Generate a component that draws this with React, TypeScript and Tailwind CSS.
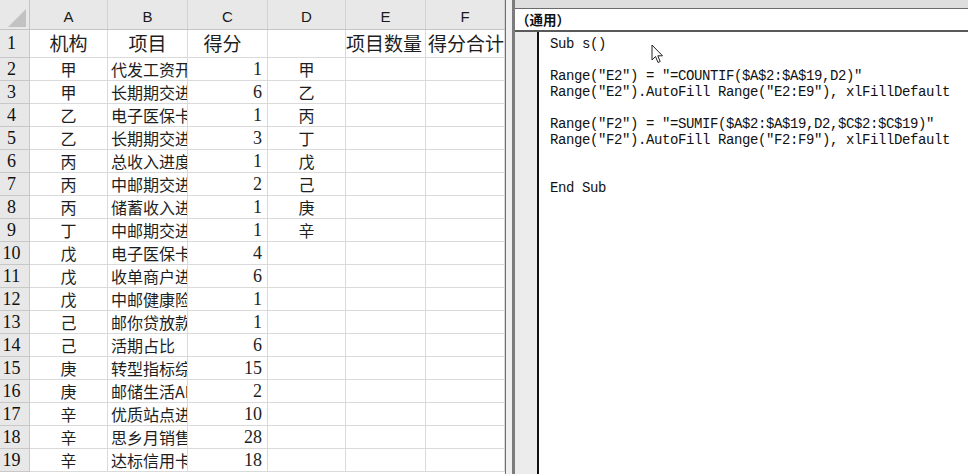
import React from 'react';

// column widths of the sheet, A..F
const COLS = ['w-[78px]', 'w-[80px]', 'w-[80px]', 'w-[78px]', 'w-[80px]', 'w-[79px]'];
const LETTERS = ['A', 'B', 'C', 'D', 'E', 'F'];

const ROWS: [string, string, number, string][] = [
  ['甲', '代发工资开户', 1, '甲'],
  ['甲', '长期期交进度', 6, '乙'],
  ['乙', '电子医保卡', 1, '丙'],
  ['乙', '长期期交进度', 3, '丁'],
  ['丙', '总收入进度', 1, '戊'],
  ['丙', '中邮期交进度', 2, '己'],
  ['丙', '储蓄收入进度', 1, '庚'],
  ['丁', '中邮期交进度', 1, '辛'],
  ['戊', '电子医保卡', 4, ''],
  ['戊', '收单商户进度', 6, ''],
  ['戊', '中邮健康险', 1, ''],
  ['己', '邮你贷放款', 1, ''],
  ['己', '活期占比', 6, ''],
  ['庚', '转型指标综合', 15, ''],
  ['庚', '邮储生活APP', 2, ''],
  ['辛', '优质站点进度', 10, ''],
  ['辛', '思乡月销售', 28, ''],
  ['辛', '达标信用卡', 18, ''],
];

const CODE = [
  'Sub s()',
  '',
  'Range("E2") = "=COUNTIF($A$2:$A$19,D2)"',
  'Range("E2").AutoFill Range("E2:E9"), xlFillDefault',
  '',
  'Range("F2") = "=SUMIF($A$2:$A$19,D2,$C$2:$C$19)"',
  'Range("F2").AutoFill Range("F2:F9"), xlFillDefault',
  '',
  '',
  'End Sub',
];

const cjk = "font-['Noto_Sans_CJK_SC',sans-serif]";
const serif = "font-['Liberation_Serif','Noto_Sans_CJK_SC',serif]";

const Sheet = () => (
  <div className="flex h-full w-[505px] shrink-0 flex-col bg-white">
    {/* column headers */}
    <div className="flex h-[30px] shrink-0 border-b border-[#c4c4c4] bg-[#e8e8e8]">
      <div className="relative w-[30px] shrink-0 border-r border-[#c4c4c4]">
        <svg className="absolute bottom-[2px] right-[3px]" width="18" height="18" viewBox="0 0 18 18">
          <polygon points="18,0 18,18 0,18" fill="#c2c2c2" />
        </svg>
      </div>
      {LETTERS.map((l, i) => (
        <div
          key={l}
          className={`${COLS[i]} flex shrink-0 items-center justify-center border-r border-[#d2d2d2] pt-[5px] font-['Liberation_Sans',sans-serif] text-[15px] text-[#1a1a1a]`}
        >
          {l}
        </div>
      ))}
    </div>

    {/* row 1 */}
    <div className="flex h-[28px] shrink-0">
      <div className={`flex w-[30px] shrink-0 items-center justify-center border-b border-r border-[#c8c8c8] bg-[#e8e8e8] pr-[6px] ${serif} text-[18px] text-[#111]`}>1</div>
      <div className={`${COLS[0]} flex shrink-0 items-center justify-center border-b border-r border-[#dadada] ${cjk} text-[19px]`}>机构</div>
      <div className={`${COLS[1]} flex shrink-0 items-center justify-center border-b border-r border-[#dadada] ${cjk} text-[19px]`}>项目</div>
      <div className={`${COLS[2]} flex shrink-0 items-center justify-center border-b border-r border-[#dadada] pr-[10px] ${cjk} text-[19px]`}>得分</div>
      <div className={`${COLS[3]} shrink-0 border-b border-r border-[#dadada]`} />
      <div className={`${COLS[4]} flex shrink-0 items-center overflow-hidden whitespace-nowrap border-b border-r border-[#dadada] ${cjk} text-[19px]`}>项目数量</div>
      <div className={`${COLS[5]} flex shrink-0 items-center overflow-hidden whitespace-nowrap border-b border-r border-[#dadada] pl-[2px] ${cjk} text-[19px]`}>得分合计</div>
    </div>

    {/* data rows */}
    {ROWS.map((r, i) => (
      <div key={i} className="flex h-[23px] shrink-0">
        <div className={`flex w-[30px] shrink-0 items-center justify-center border-b border-r border-[#c8c8c8] bg-[#e8e8e8] pr-[6px] ${serif} text-[18px] text-[#111]`}>
          {i + 2}
        </div>
        <div className={`${COLS[0]} flex shrink-0 items-center justify-center border-b border-r border-[#dadada] ${cjk} text-[16px]`}>{r[0]}</div>
        <div className={`${COLS[1]} flex shrink-0 items-center overflow-hidden whitespace-nowrap border-b border-r border-[#dadada] pl-[3px] ${cjk} text-[16px]`}>
          <span className="block w-[76px] shrink-0 overflow-hidden">{r[1]}</span>
        </div>
        <div className={`${COLS[2]} flex shrink-0 items-center justify-end border-b border-r border-[#dadada] pr-[5px] ${serif} text-[18px]`}>{r[2]}</div>
        <div className={`${COLS[3]} flex shrink-0 items-center justify-center border-b border-r border-[#dadada] ${cjk} text-[16px]`}>{r[3]}</div>
        <div className={`${COLS[4]} shrink-0 border-b border-r border-[#dadada]`} />
        <div className={`${COLS[5]} shrink-0 border-b border-r border-[#dadada]`} />
      </div>
    ))}
  </div>
);

const Editor = () => (
  <div className="flex h-full min-w-0 flex-1 flex-col bg-white">
    <div className="h-[9px] shrink-0 border-b border-[#6a6a6a] bg-[#dedede]" />
    <div className={`flex h-[23px] shrink-0 items-center border-b-2 border-[#5a5a5a] pl-[1px] ${cjk} text-[13.5px] font-bold text-[#111]`}>
      （通用）
    </div>
    <div className="flex min-h-0 flex-1">
      <div className="w-[24px] shrink-0 border-r-2 border-[#111] bg-[#ececec]" />
      <div className="flex-1 pl-[11px] pt-[4px] font-['Liberation_Mono',monospace] text-[14px] tracking-[-0.4px] text-[#111]">
        {CODE.map((line, i) => (
          <div key={i} className="h-[16px] whitespace-pre leading-[16px]">
            {line}
          </div>
        ))}
      </div>
    </div>
  </div>
);

export default function App() {
  return (
    <div className="relative flex h-[474px] w-[968px] overflow-hidden bg-white text-[#1e1e1e]">
      <Sheet />
      {/* splitter between the sheet and the VBA window */}
      <div className="h-full w-[10px] shrink-0 border-l border-r-[3px] border-l-[#707070] border-r-[#7c7c7c] bg-[#efefef]" />
      <Editor />
      {/* mouse pointer */}
      <svg className="absolute left-[651px] top-[44px]" width="13" height="20" viewBox="0 0 13 20">
        <path d="M1 1 L1 16 L4.5 12.5 L7 18.5 L9.2 17.5 L6.8 11.8 L11.5 11.8 Z" fill="#fff" stroke="#222" strokeWidth="1" strokeLinejoin="miter" />
      </svg>
    </div>
  );
}
